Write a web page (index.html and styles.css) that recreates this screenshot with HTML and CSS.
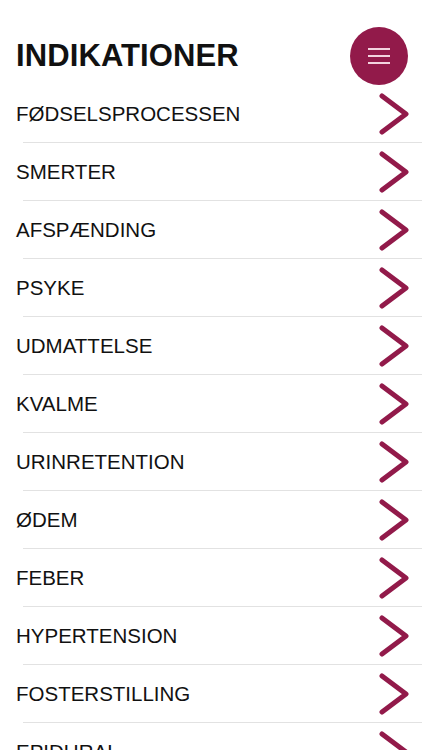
FILE: index.html
```html
<!DOCTYPE html>
<html lang="da">
<head>
    <meta charset="UTF-8">
    <meta name="viewport" content="width=device-width, initial-scale=1.0">
    <title>Indikationer</title>
    <link rel="stylesheet" href="styles.css">
</head>
<body>
    <header class="page-header">
        <h1>INDIKATIONER</h1>
        <button class="menu-button" aria-label="Menu">
            <span></span>
            <span></span>
            <span></span>
        </button>
    </header>

    <ul class="topic-list">
        <li><span class="label">FØDSELSPROCESSEN</span><svg class="chevron" viewBox="0 0 30 44"><polyline points="3,4 27,22 3,40"/></svg></li>
        <li><span class="label">SMERTER</span><svg class="chevron" viewBox="0 0 30 44"><polyline points="3,4 27,22 3,40"/></svg></li>
        <li><span class="label">AFSPÆNDING</span><svg class="chevron" viewBox="0 0 30 44"><polyline points="3,4 27,22 3,40"/></svg></li>
        <li><span class="label">PSYKE</span><svg class="chevron" viewBox="0 0 30 44"><polyline points="3,4 27,22 3,40"/></svg></li>
        <li><span class="label">UDMATTELSE</span><svg class="chevron" viewBox="0 0 30 44"><polyline points="3,4 27,22 3,40"/></svg></li>
        <li><span class="label">KVALME</span><svg class="chevron" viewBox="0 0 30 44"><polyline points="3,4 27,22 3,40"/></svg></li>
        <li><span class="label">URINRETENTION</span><svg class="chevron" viewBox="0 0 30 44"><polyline points="3,4 27,22 3,40"/></svg></li>
        <li><span class="label">ØDEM</span><svg class="chevron" viewBox="0 0 30 44"><polyline points="3,4 27,22 3,40"/></svg></li>
        <li><span class="label">FEBER</span><svg class="chevron" viewBox="0 0 30 44"><polyline points="3,4 27,22 3,40"/></svg></li>
        <li><span class="label">HYPERTENSION</span><svg class="chevron" viewBox="0 0 30 44"><polyline points="3,4 27,22 3,40"/></svg></li>
        <li><span class="label">FOSTERSTILLING</span><svg class="chevron" viewBox="0 0 30 44"><polyline points="3,4 27,22 3,40"/></svg></li>
        <li><span class="label">EPIDURAL</span><svg class="chevron" viewBox="0 0 30 44"><polyline points="3,4 27,22 3,40"/></svg></li>
    </ul>
</body>
</html>
```

FILE: styles.css
```css
/* Page base */
body {
    font-family: "Liberation Sans", Arial, sans-serif;
    background-color: #ffffff;
    color: #111;
    margin: 0;
    padding: 0;
    height: 750px;
    overflow: hidden;
}

/* Header with title and round menu button */
.page-header {
    display: flex;
    justify-content: space-between;
    align-items: center;
    padding: 27px 14px 0 16px;
}

h1 {
    margin: 0;
    font-size: 31px;
    font-weight: bold;
    letter-spacing: 0.1px;
}

.menu-button {
    width: 58px;
    height: 58px;
    border-radius: 50%;
    border: none;
    background-color: #921a4a; /* Deep magenta */
    display: flex;
    flex-direction: column;
    justify-content: center;
    align-items: center;
    gap: 5.5px;
    padding: 0;
}

.menu-button span {
    display: block;
    width: 22px;
    height: 1.5px;
    background-color: #f3d3df;
}

/* Topic list */
.topic-list {
    list-style: none;
    margin: 0;
    padding: 0;
}

.topic-list li {
    display: flex;
    justify-content: space-between;
    align-items: center;
    height: 57px;
    margin-left: 23px;
    padding-right: 13px;
    border-bottom: 1px solid #e2e2e2; /* Light divider */
}

.label {
    margin-left: -7px;
    font-size: 20.5px;
}

.chevron {
    width: 30px;
    height: 44px;
}

.chevron polyline {
    fill: none;
    stroke: #921a4a;
    stroke-width: 5;
    stroke-linecap: round;
    stroke-linejoin: round;
}
```
